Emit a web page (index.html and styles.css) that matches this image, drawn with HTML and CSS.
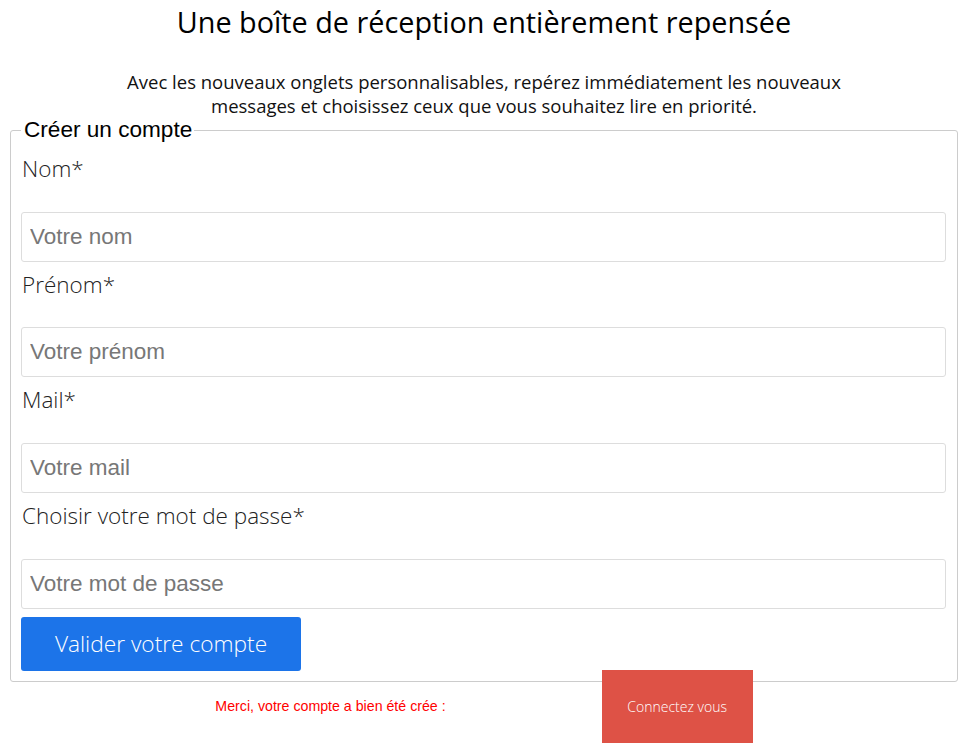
FILE: index.html
```html
<!DOCTYPE html>
<html lang="fr">
<head>
<meta charset="utf-8">
<title>Créer un compte</title>
<link rel="stylesheet" href="styles.css">
</head>
<body>
<header class="intro">
  <h1 class="intro-title">Une boîte de réception entièrement repensée</h1>
  <p class="intro-text">Avec les nouveaux onglets personnalisables, repérez immédiatement les nouveaux messages et choisissez ceux que vous souhaitez lire en priorité.</p>
</header>
<form class="signup">
  <fieldset class="signup-box">
    <legend class="signup-legend">Créer un compte</legend>
    <label class="field-label" for="nom">Nom*</label>
    <input class="field-input" id="nom" type="text" placeholder="Votre nom">
    <label class="field-label" for="prenom">Prénom*</label>
    <input class="field-input" id="prenom" type="text" placeholder="Votre prénom">
    <label class="field-label" for="mail">Mail*</label>
    <input class="field-input" id="mail" type="email" placeholder="Votre mail">
    <label class="field-label" for="mdp">Choisir votre mot de passe*</label>
    <input class="field-input" id="mdp" type="password" placeholder="Votre mot de passe">
    <button class="submit-btn" type="button">Valider votre compte</button>
  </fieldset>
</form>
<div class="confirm">
  <span class="confirm-text">Merci, votre compte a bien été crée :</span>
  <a class="connect-btn" href="#">Connectez vous</a>
</div>
</body>
</html>
```
FILE: styles.css
```css
html, body {
  background: #fff;
}
body {
  margin: 0 8px;
  font-family: "Open Sans", "Liberation Sans", sans-serif;
  color: #000;
}
.intro {
  text-align: center;
}
.intro-title {
  margin: 0;
  padding-top: 3px;
  font-size: 28.8px;
  font-weight: 400;
  line-height: 38px;
}
.intro-text {
  margin: 29px auto 0;
  max-width: 760px;
  font-size: 18.5px;
  line-height: 24px;
  color: #111;
}
.signup {
  margin: -1px 0 0;
}
.signup-box {
  margin: 0 2px;
  padding: 3px 11px 10px 10px;
  border: 1px solid #ccc;
  border-radius: 3px;
  display: flex;
  flex-direction: column;
}
.signup-legend {
  padding: 0 2px 0 3px;
  font-family: "Liberation Sans", Arial, sans-serif;
  font-size: 22.6px;
  color: #000;
}
.field-label {
  display: block;
  margin: 8px 0 27.67px 1px;
  font-family: "Open Sans", sans-serif;
  font-weight: 300;
  font-size: 22.5px;
  line-height: 30px;
  color: #222;
}
.field-input {
  box-sizing: border-box;
  width: 100%;
  height: 50px;
  margin: 0;
  padding: 0 8px;
  border: 1px solid #ddd;
  border-radius: 3px;
  font-family: "Liberation Sans", Arial, sans-serif;
  font-size: 22.5px;
  color: #333;
  background: #fff;
}
.field-input::placeholder {
  color: #777;
}
.submit-btn {
  align-self: flex-start;
  margin-top: 8px;
  width: 280px;
  height: 54px;
  border: none;
  border-radius: 3px;
  background: #1c74e9;
  color: #fff;
  font-family: "Open Sans", sans-serif;
  font-weight: 300;
  font-size: 22.7px;
  padding: 0;
}
.confirm {
  display: flex;
  justify-content: center;
  align-items: center;
  gap: 156px;
  margin-top: -12px;
  position: relative;
}
.confirm-text {
  font-family: "Liberation Sans", Arial, sans-serif;
  font-size: 14.2px;
  color: #f00;
}
.connect-btn {
  display: flex;
  align-items: center;
  justify-content: center;
  width: 151px;
  height: 73px;
  background: #de5246;
  color: #fff;
  text-decoration: none;
  font-family: "Open Sans", sans-serif;
  font-weight: 300;
  font-size: 14px;
}
```
